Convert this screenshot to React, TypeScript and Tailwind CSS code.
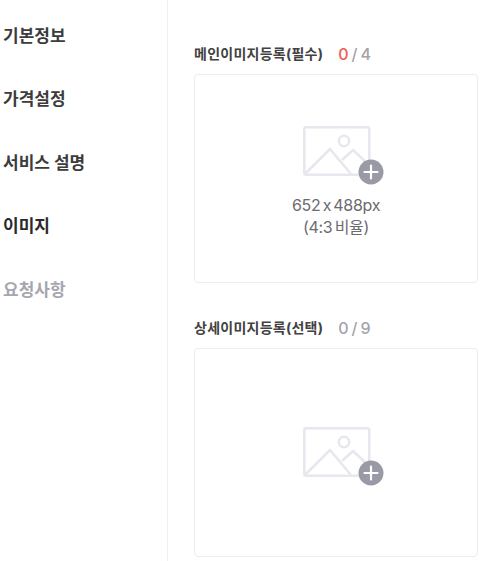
import React from "react";

function PlaceholderIcon() {
  return (
    <svg width="84" height="64" viewBox="0 0 84 64" fill="none" className="block">
      <rect x="1.3" y="1.3" width="65" height="47.4" rx="2" stroke="#e7e8ef" strokeWidth="2.6" />
      <circle cx="41" cy="15" r="5.2" stroke="#e7e8ef" strokeWidth="2.6" />
      <path d="M2 48 L27 23 L48 48" stroke="#e7e8ef" strokeWidth="2.6" strokeLinejoin="round" />
      <path d="M39 34 L50 24 L66 39" stroke="#e7e8ef" strokeWidth="2.6" strokeLinejoin="round" />
      <circle cx="68" cy="46" r="12.5" fill="#9a9aa6" />
      <path d="M68 39.5 V52.5 M61.5 46 H74.5" stroke="#fff" strokeWidth="2.2" strokeLinecap="round" />
    </svg>
  );
}

function Section({
  title,
  current,
  currentClass,
  total,
  children,
}: {
  title: string;
  current: string;
  currentClass: string;
  total: string;
  children?: React.ReactNode;
}) {
  return (
    <section className="flex flex-col">
      <div className="flex h-[20px] items-center text-[14px] font-bold leading-[20px] tracking-[0.25px] text-[#424242]">
        <span>{title}</span>
        <span className="ml-[15px] flex items-center gap-[3px] text-[16px] font-medium tracking-normal text-[#a3a3ab]">
          <span className={currentClass}>{current}</span>
          <span>/</span>
          <span>{total}</span>
        </span>
      </div>
      <div className="mt-[10px] flex h-[209px] w-[284px] flex-col items-center rounded-[4px] border border-[#ececf1] bg-white">
        {children}
      </div>
    </section>
  );
}

export default function App() {
  const items = [
    { label: "기본정보", cls: "text-[#3c3c3c]" },
    { label: "가격설정", cls: "text-[#3c3c3c]" },
    { label: "서비스 설명", cls: "text-[#3c3c3c]" },
    { label: "이미지", cls: "text-[#2a2a2a]" },
    { label: "요청사항", cls: "text-[#a6a6ae]" },
  ];
  return (
    <div className="flex h-[561px] w-[485px] overflow-hidden bg-white font-['Inter','Noto_Sans_CJK_KR',sans-serif]">
      <nav className="flex h-full w-[168px] shrink-0 flex-col gap-[39.4px] border-r border-[#f0f0f3] pt-[24px]">
        {items.map((i) => (
          <div key={i.label} className={`h-[24px] pl-[3px] text-[17px] font-bold leading-[24px] ${i.cls}`}>
            {i.label}
          </div>
        ))}
      </nav>
      <main className="flex flex-col gap-[35px] pl-[26px] pt-[44px]">
        <Section title="메인이미지등록(필수)" current="0" currentClass="text-[#ef5a50]" total="4">
          <div className="mt-[51px] ml-[17px]">
            <PlaceholderIcon />
          </div>
          <div className="mt-[4px] text-center text-[16px] leading-[22px] tracking-[-0.3px] [word-spacing:-2px] text-[#6b6b6f]">
            <div>652 x 488px</div>
            <div>(4:3 비율)</div>
          </div>
        </Section>
        <Section title="상세이미지등록(선택)" current="0" currentClass="text-[#a3a3ab]" total="9">
          <div className="mt-[78px] ml-[17px]">
            <PlaceholderIcon />
          </div>
        </Section>
      </main>
    </div>
  );
}
